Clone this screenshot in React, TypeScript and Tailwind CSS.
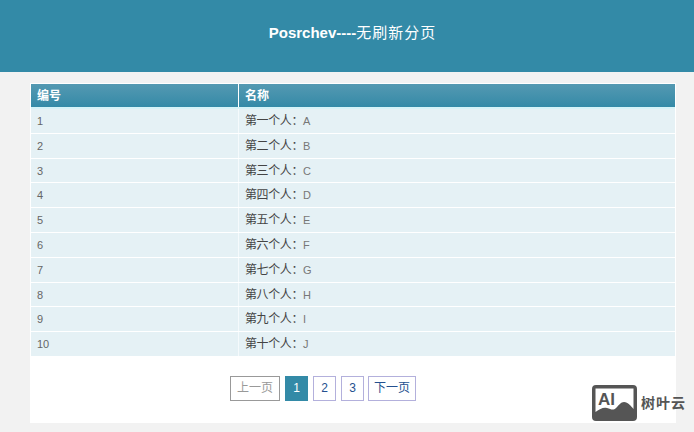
const names = ["一", "二", "三", "四", "五", "六", "七", "八", "九", "十"];
const letters = "ABCDEFGHIJ";
const font = "font-['Liberation_Sans','Noto_Sans_CJK_SC',sans-serif]";

function Watermark() {
  return (
    <div className="absolute left-[592px] top-[385px] flex items-center gap-[4px]">
      <svg width="45" height="36" viewBox="0 0 45 36">
        <path
          fillRule="evenodd"
          fill="#555555"
          d="M4 0H41Q45 0 45 4V32Q45 36 41 36H4Q0 36 0 32V4Q0 0 4 0ZM3.5 3.5V27C8 24 11 22 15 23C19 24 21 26 24 23C27 20 29 17 32 17C36 17 39 21 41.5 24V3.5Z"
        />
        <text x="6" y="20" fill="#555555" fontSize="17" fontWeight="700" fontFamily="Liberation Sans, sans-serif">
          AI
        </text>
      </svg>
      <span className="text-[14px] leading-none font-bold tracking-[1px] text-[#555555]">树叶云</span>
    </div>
  );
}

function Pager() {
  const box = "flex h-[25px] items-center justify-center border text-[12px]";
  return (
    <div className="flex gap-[5px] pt-[19px] pl-[199px]">
      <span className={`${box} w-[50px] border-[#999999] text-[#999999]`}>上一页</span>
      <span className={`${box} w-[23px] border-[#338aa7] bg-[#338aa7] text-white`}>1</span>
      <span className={`${box} w-[23px] border-[#b3b0dc] text-[#24508f]`}>2</span>
      <span className={`${box} w-[23px] border-[#b3b0dc] text-[#24508f]`}>3</span>
      <span className={`${box} -ml-[1px] w-[48px] border-[#b3b0dc] text-[#24508f]`}>下一页</span>
    </div>
  );
}

export default function App() {
  return (
    <div className={`relative h-[432px] w-[694px] overflow-hidden bg-[#f2f2f2] ${font}`}>
      <div className="flex h-[72px] items-center justify-center bg-[#338aa7] pb-[5px] pl-[11px] text-white">
        <span className="text-[15px] font-bold">Posrchev----</span>
        <span className="text-[15px] tracking-[1px]">无刷新分页</span>
      </div>
      <div className="mx-[30px] mt-[11px] h-[340px] w-[646px] bg-white pt-[1px] pr-[1px] pl-[1px]">
        <div className="flex h-[23px] bg-gradient-to-b from-[#5499b2] to-[#338aa7] text-[12px] font-bold leading-[24px] text-white">
          <div className="w-[207px] pl-[6px]">编号</div>
          <div className="flex-1 border-l-[1px] border-white pl-[6px]">名称</div>
        </div>
        <div className="h-[2px] bg-[#d5f3f8]" />
        {names.map((n, i) => (
          <div key={n} className="mb-[1px] flex h-[23.8px] bg-[#e5f1f5] text-[11px] leading-[25px] text-[#666666]">
            <div className="w-[207px] pl-[6px]">{i + 1}</div>
            <div className="flex-1 border-l-[1px] border-[#f5fafc] pl-[6px] text-[12px] text-[#444444]">
              <span className="tracking-[-0.4px]">第{n}个人：</span>
              <span className="text-[11px] text-[#777777]">{letters[i]}</span>
            </div>
          </div>
        ))}
        <Pager />
      </div>
      <Watermark />
    </div>
  );
}
